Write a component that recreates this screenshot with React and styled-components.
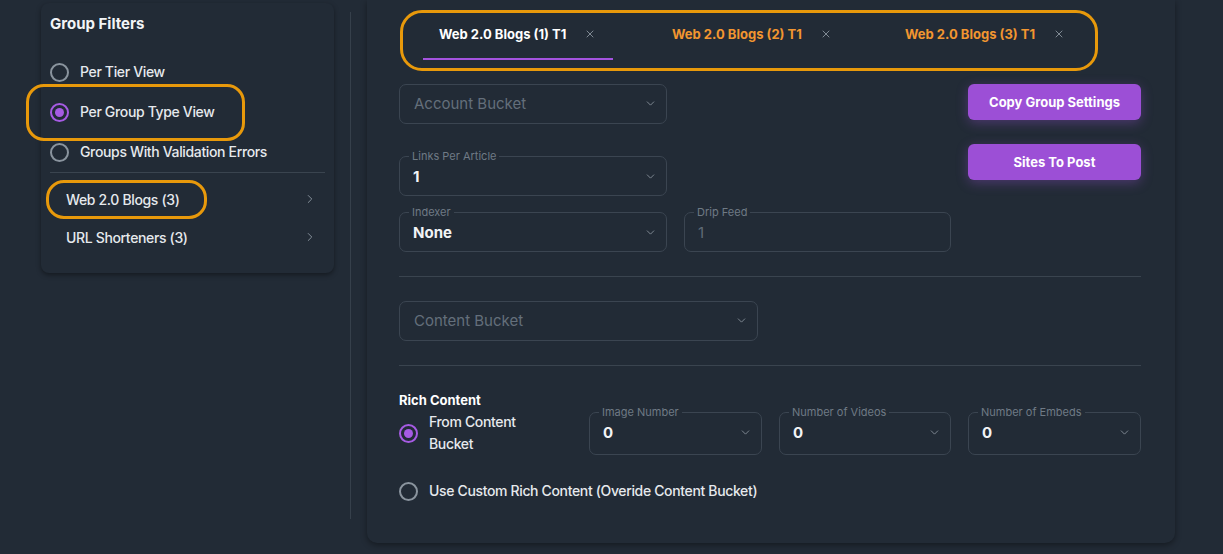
import React from 'react';
import styled, { createGlobalStyle, css } from 'styled-components';
import { ChevronDown, ChevronRight, X } from 'lucide-react';

const GlobalStyle = createGlobalStyle`
  * { box-sizing: border-box; }
  body {
    margin: 0;
    background: #222b36;
    font-family: Inter, "Liberation Sans", sans-serif;
    color: #e6e9ed;
  }
`;

const Page = styled.div`
  display: flex;
  align-items: flex-start;
  height: 554px;
  padding-left: 41px;
  background: #222b36;
  overflow: hidden;
`;

const Sidebar = styled.aside`
  width: 293px;
  padding-top: 3px;
`;

const FilterPanel = styled.div`
  background: #222b36;
  border-radius: 8px;
  box-shadow: 0 2px 5px rgba(0, 0, 0, 0.4);
  padding: 11px 9px 17px;
`;

const PanelTitle = styled.h3`
  margin: 0 0 18px;
  font-size: 15px;
  line-height: 20px;
  font-weight: 700;
  color: #f2f4f6;
`;

const annotation = css`
  position: relative;
  &::after {
    content: '';
    position: absolute;
    border: 3px solid #e8990b;
    pointer-events: none;
  }
`;

const RadioRow = styled.label`
  display: flex;
  align-items: center;
  gap: 11px;
  height: ${p => p.$h || 40}px;
  font-size: 14px;
  font-weight: 500;
  letter-spacing: -0.35px;
  color: #e6e9ed;
`;

const RadioText = styled.span`
  ${p => p.$marked && annotation}
  &::after {
    inset: -17px -31px -18px -54px;
    border-radius: 18px;
  }
  max-width: ${p => p.$maxw || 'none'};
  line-height: 22px;
`;

const Radio = styled.span`
  flex: none;
  width: 19px;
  height: 19px;
  border-radius: 50%;
  border: 2px solid ${p => (p.$on ? '#a65be3' : '#8a949e')};
  display: flex;
  align-items: center;
  justify-content: center;
  &::before {
    content: '';
    width: 9px;
    height: 9px;
    border-radius: 50%;
    background: ${p => (p.$on ? '#a65be3' : 'transparent')};
  }
`;

const Divider = styled.hr`
  margin: ${p => p.$m || '0'};
  border: none;
  height: 1px;
  background: #3a444f;
`;

const GroupItem = styled.div`
  display: flex;
  align-items: center;
  justify-content: space-between;
  height: 38px;
  padding: 0 8px 0 16px;
  font-size: 14px;
  font-weight: 500;
  letter-spacing: -0.35px;
  color: #e6e9ed;
  svg { color: #8a949e; }
`;

const GroupName = styled.span`
  ${p => p.$marked && annotation}
  &::after {
    inset: -11px -27px -11px -20px;
    border-radius: 18px;
  }
`;

const VDivider = styled.div`
  width: 1px;
  height: 507px;
  margin: 12px 16px 0;
  background: #36404b;
`;

const Card = styled.main`
  width: 808px;
  height: 543px;
  padding: 0 34px 0 32px;
  border-radius: 0 0 10px 10px;
  background: #222b36;
  box-shadow: 0 2px 6px rgba(0, 0, 0, 0.4);
`;

const TabList = styled.nav`
  display: inline-flex;
  margin: 13px 0 0 24px;
  ${annotation}
  &::after {
    inset: -3px -19px -11px -23px;
    border-radius: 22px;
  }
`;

const Tab = styled.div`
  display: flex;
  align-items: center;
  gap: 18px;
  width: 190px;
  height: 47px;
  padding: 0 14px 4px 16px;
  margin-right: ${p => (p.$last ? 0 : 43)}px;
  border-bottom: 2px solid ${p => (p.$active ? '#a453df' : 'transparent')};
  font-size: 13px;
  font-weight: 700;
  white-space: nowrap;
  color: ${p => (p.$active ? '#ffffff' : '#f29630')};
  svg { color: #8a949e; flex: none; }
`;

const TopSection = styled.section`
  display: flex;
  justify-content: space-between;
  margin-top: 24px;
`;

const Form = styled.div`
  width: 552px;
  display: flex;
  flex-direction: column;
`;

const FieldRow = styled.div`
  display: flex;
  gap: 17px;
  margin-top: ${p => p.$mt || 0}px;
`;

const SelectBox = styled.div`
  display: flex;
  align-items: center;
  justify-content: space-between;
  width: ${p => p.$w}px;
  height: 40px;
  padding: 0 9px 1px 14px;
  border: 1px solid #3b4551;
  border-radius: 7px;
  font-size: 15px;
  color: #646f7b;
  svg { color: #8a949e; }
`;

const Field = styled.fieldset`
  width: ${p => p.$w}px;
  margin: 0;
  padding: 0 9px 4px 13px;
  border: 1px solid #3b4551;
  border-radius: 7px;
  min-width: 0;
`;

const Legend = styled.legend`
  margin-left: -4px;
  padding: 0 3px;
  font-size: 11px;
  line-height: 12px;
  color: #6f7a85;
`;

const FieldValue = styled.div`
  display: flex;
  align-items: center;
  justify-content: space-between;
  height: 29px;
  font-size: 15px;
  font-weight: 700;
  color: ${p => (p.$muted ? '#5f6a76' : '#f2f4f6')};
  ${p => p.$muted && 'font-weight: 400;'}
  svg { color: #8a949e; }
`;

const ButtonCol = styled.div`
  display: flex;
  flex-direction: column;
  gap: 24px;
  width: 173px;
`;

const Button = styled.button`
  height: 36px;
  border: none;
  border-radius: 6px;
  background: #9c4fd6;
  color: #fff;
  font-family: inherit;
  font-size: 13px;
  font-weight: 700;
  box-shadow: 0 3px 12px rgba(156, 79, 214, 0.35);
  cursor: pointer;
`;

const SectionTitle = styled.h4`
  margin: 28px 0 0;
  font-size: 13px;
  line-height: 12px;
  font-weight: 700;
  color: #fff;
`;

const RichRow = styled.div`
  display: flex;
  gap: 17px;
`;

const RichOption = styled.div`
  width: 173px;
  padding-top: 5px;
`;

const CustomRow = styled.div`
  margin-top: 25px;
`;

const Select = ({ label, value, w, muted, noIcon }) => (
  <Field $w={w}>
    <Legend>{label}</Legend>
    <FieldValue $muted={muted}>
      {value}
      {!noIcon && <ChevronDown size={13} strokeWidth={1.6} />}
    </FieldValue>
  </Field>
);

const tabs = ['Web 2.0 Blogs (1) T1', 'Web 2.0 Blogs (2) T1', 'Web 2.0 Blogs (3) T1'];

const App = () => {
  return (
    <React.Fragment>
      <GlobalStyle />
      <Page>
        <Sidebar>
          <FilterPanel>
            <PanelTitle>Group Filters</PanelTitle>
            <RadioRow><Radio /><RadioText>Per Tier View</RadioText></RadioRow>
            <RadioRow><Radio $on /><RadioText $marked>Per Group Type View</RadioText></RadioRow>
            <RadioRow><Radio /><RadioText>Groups With Validation Errors</RadioText></RadioRow>
            <Divider $m="0 0 7px" />
            <GroupItem>
              <GroupName $marked>Web 2.0 Blogs (3)</GroupName>
              <ChevronRight size={14} strokeWidth={1.6} />
            </GroupItem>
            <GroupItem>
              <GroupName>URL Shorteners (3)</GroupName>
              <ChevronRight size={14} strokeWidth={1.6} />
            </GroupItem>
          </FilterPanel>
        </Sidebar>
        <VDivider />
        <Card>
          <TabList>
            {tabs.map((t, i) => (
              <Tab key={t} $active={i === 0} $last={i === tabs.length - 1}>
                {t}
                <X size={12} strokeWidth={1.8} />
              </Tab>
            ))}
          </TabList>

          <TopSection>
            <Form>
              <SelectBox $w={268}>
                Account Bucket
                <ChevronDown size={13} strokeWidth={1.6} />
              </SelectBox>
              <FieldRow $mt={26}>
                <Select label="Links Per Article" value="1" w={268} />
              </FieldRow>
              <FieldRow $mt={10}>
                <Select label="Indexer" value="None" w={268} />
                <Select label="Drip Feed" value="1" w={267} muted noIcon />
              </FieldRow>
            </Form>
            <ButtonCol>
              <Button>Copy Group Settings</Button>
              <Button>Sites To Post</Button>
            </ButtonCol>
          </TopSection>

          <Divider $m="24px 0" />
          <SelectBox $w={359}>
            Content Bucket
            <ChevronDown size={13} strokeWidth={1.6} />
          </SelectBox>
          <Divider $m="24px 0 0" />

          <SectionTitle>Rich Content</SectionTitle>
          <RichRow>
            <RichOption>
              <RadioRow $h={44}>
                <Radio $on />
                <RadioText $maxw="100px">From Content Bucket</RadioText>
              </RadioRow>
            </RichOption>
            <Select label="Image Number" value="0" w={173} />
            <Select label="Number of Videos" value="0" w={172} />
            <Select label="Number of Embeds" value="0" w={173} />
          </RichRow>
          <CustomRow>
            <RadioRow $h={22}>
              <Radio />
              <RadioText>Use Custom Rich Content (Overide Content Bucket)</RadioText>
            </RadioRow>
          </CustomRow>
        </Card>
      </Page>
    </React.Fragment>
  );
};

export default App;
